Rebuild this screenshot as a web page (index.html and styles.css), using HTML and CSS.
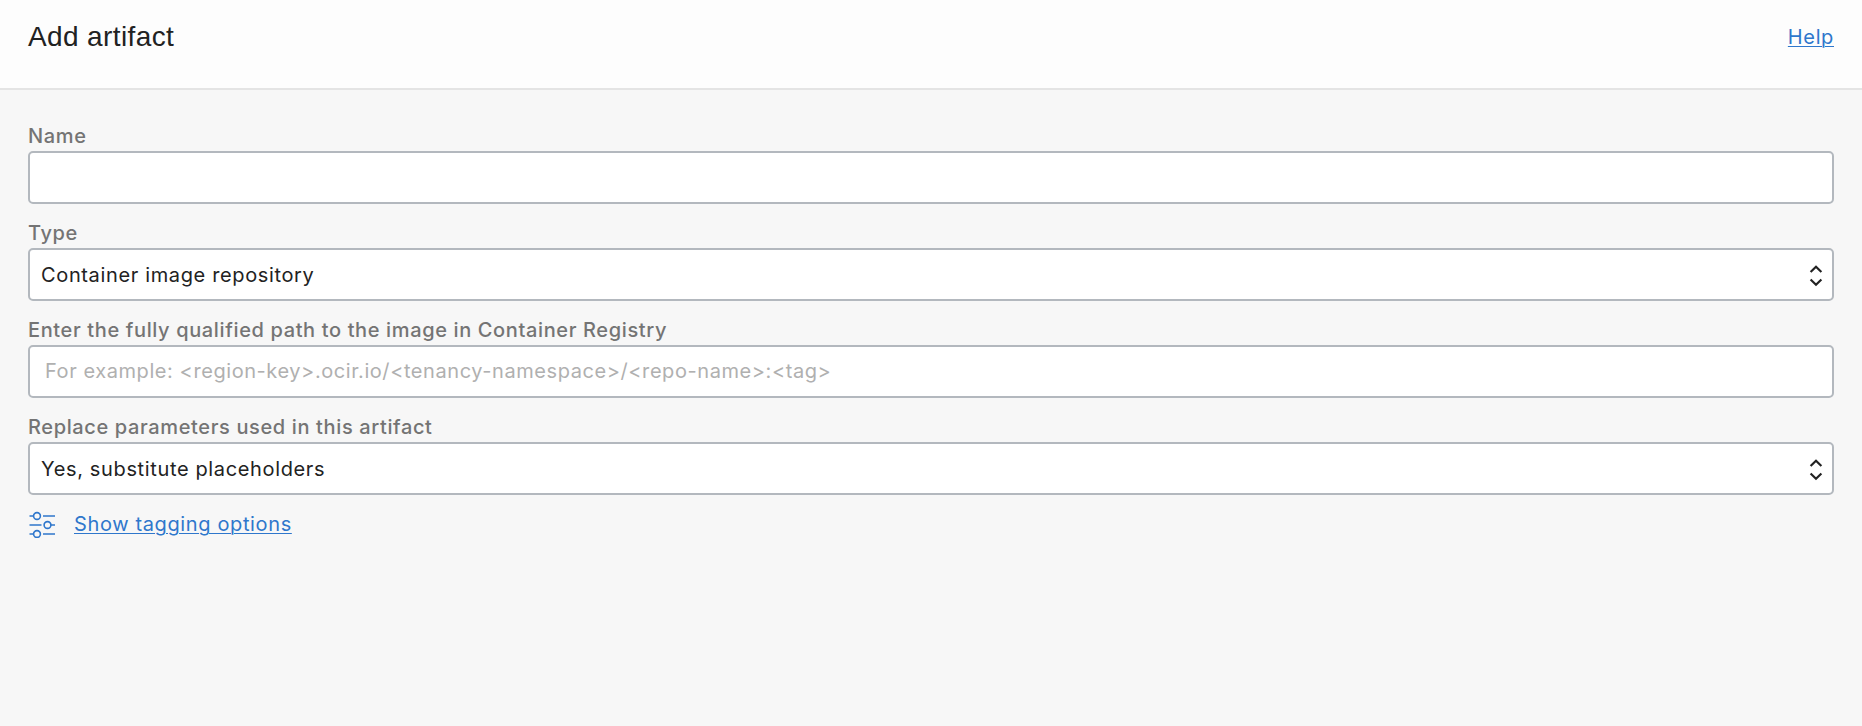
FILE: index.html
```
<!DOCTYPE html>
<html lang="en">
<head>
<meta charset="utf-8">
<title>Add artifact</title>
<link rel="stylesheet" href="styles.css">
</head>
<body>
<header class="panel-header">
  <h1 class="title">Add artifact</h1>
  <a class="link help" href="#">Help</a>
</header>
<main class="form">
  <div class="field">
    <label class="label" for="name">Name</label>
    <input class="control" id="name" type="text">
  </div>
  <div class="field">
    <span class="label">Type</span>
    <div class="control select">
      <span class="value">Container image repository</span>
      <svg class="chevrons" width="14" height="24" viewBox="0 0 14 24"><path d="M1.600 9 7 3.800 12.400 9M1.600 16.500 7 21.700 12.400 16.500"/></svg>
    </div>
  </div>
  <div class="field">
    <label class="label" for="path">Enter the fully qualified path to the image in Container Registry</label>
    <input class="control" id="path" type="text" placeholder="For example: &lt;region-key&gt;.ocir.io/&lt;tenancy-namespace&gt;/&lt;repo-name&gt;:&lt;tag&gt;">
  </div>
  <div class="field">
    <span class="label">Replace parameters used in this artifact</span>
    <div class="control select">
      <span class="value">Yes, substitute placeholders</span>
      <svg class="chevrons" width="14" height="24" viewBox="0 0 14 24"><path d="M1.600 9 7 3.800 12.400 9M1.600 16.500 7 21.700 12.400 16.500"/></svg>
    </div>
  </div>
  <div class="tagging">
    <svg class="sliders" width="27" height="28" viewBox="0 0 27 28"><path d="M.5 6H4.500M14 6H26M.5 15H12.500M22 15H26M.5 24H4.500M14 24H26"/><circle cx="8" cy="6" r="3.400"/><circle cx="18.500" cy="15" r="3.400"/><circle cx="8" cy="24" r="3.400"/></svg>
    <a class="link" href="#">Show tagging options</a>
  </div>
</main>
</body>
</html>
```
FILE: styles.css
```
* { box-sizing: border-box; }
body {
  margin: 0;
  min-height: 726px;
  background: #f7f7f7;
  color: #222;
  font-family: Inter, "Liberation Sans", sans-serif;
  font-size: 20px;
}
.panel-header {
  display: flex;
  justify-content: space-between;
  height: 90px;
  padding: 20px 28px 0;
  background: #fdfdfd;
  border-bottom: 2px solid #e4e4e4;
}
.title {
  margin: 0;
  font: 400 28px/33px "Liberation Sans", sans-serif;
  letter-spacing: 0.38px;
}
.link {
  color: #2f77cc;
  line-height: 28px;
  letter-spacing: 0.63px;
  text-decoration: underline;
  text-decoration-thickness: 1px;
  text-underline-offset: 2px;
}
.help { padding-top: 3px; }
.form { padding: 32px 28px 0; }
.field {
  display: flex;
  flex-direction: column;
  height: 97px;
}
.label {
  height: 29px;
  color: #747474;
  font-weight: 500;
  line-height: 28px;
  letter-spacing: 0.63px;
}
.control {
  width: 100%;
  height: 53px;
  padding: 0 15px 1px;
  border: 2px solid #b3b8be;
  border-radius: 5px;
  background: #fff;
  color: #222;
  font: inherit;
  letter-spacing: 0.57px;
}
.control::placeholder { color: #b0b0b0; opacity: 1; }
.select {
  display: flex;
  align-items: center;
  justify-content: space-between;
  padding: 0 9px 0 11px;
  letter-spacing: 0.64px;
}
.chevrons { fill: none; stroke: #222; stroke-width: 2.2; }
.tagging {
  display: flex;
  align-items: center;
  gap: 18px;
  padding-left: 1px;
}
.sliders { fill: none; stroke: #2f77cc; stroke-width: 1.6; }
```
